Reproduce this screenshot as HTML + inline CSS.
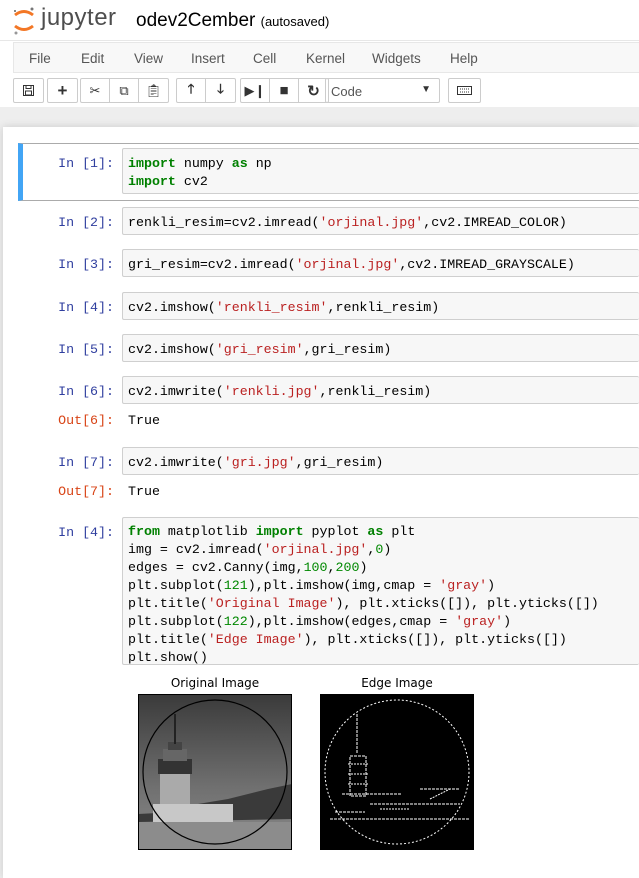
<!DOCTYPE html>
<html><head><meta charset="utf-8"><style>
*{margin:0;padding:0;box-sizing:border-box}
body{width:639px;height:878px;overflow:hidden;background:#fff;font-family:"Liberation Sans",sans-serif;position:relative}
.a{position:absolute}
.menu span{position:absolute;top:8px;font-size:13.5px;color:#555}
.btn{position:absolute;top:78px;height:25px;border:1px solid #ccc;border-radius:2px;background:#fff;display:flex}
.btn div{width:29px;height:23px;border-right:1px solid #ccc;display:flex;align-items:center;justify-content:center;font-size:13px;color:#333}
.btn div:last-child{border-right:none}
.pr{position:absolute;right:525px;font-family:"Liberation Mono",monospace;font-size:13.3px;color:#303f9f;white-space:pre}
.out{color:#d84315}
.inp{position:absolute;left:122px;right:0;background:#f7f7f7;border:1px solid #cfcfcf;border-radius:2px;border-right:none}
.code{position:absolute;left:128px;font-family:"Liberation Mono",monospace;font-size:13.3px;color:#000;white-space:pre;line-height:18px}
.k{color:#008000;font-weight:bold}.s{color:#ba2121}.n{color:#080}
</style></head><body>
<svg class="a" style="left:12px;top:6px" width="24" height="30" viewBox="0 0 24 30">
<path d="M3 9 Q12 2 21 9" stroke="#f37726" stroke-width="3" fill="none"/>
<path d="M3 20 Q12 27 21 20" stroke="#f37726" stroke-width="3" fill="none"/>
<circle cx="20" cy="3" r="1.5" fill="#767677"/><circle cx="4" cy="27" r="1.5" fill="#989798"/><circle cx="3" cy="5" r="1" fill="#616262"/>
</svg>
<div class="a" style="left:41px;top:4px;font-size:24px;color:#4e4e4e;letter-spacing:0.5px">jupyter</div>
<div class="a" style="left:136px;top:10px;font-size:19px;color:#000">odev2Cember <span style="font-size:13px">(autosaved)</span></div>
<div class="a" style="left:0;top:40px;width:639px;height:1px;background:#e7e7e7"></div>
<div class="a menu" style="left:13px;top:42px;width:626px;height:31px;background:#f8f8f8;border:1px solid #e7e7e7;border-right:none">
<span style="left:15px">File</span><span style="left:67px">Edit</span><span style="left:120px">View</span><span style="left:177px">Insert</span><span style="left:239px">Cell</span><span style="left:292px">Kernel</span><span style="left:358px">Widgets</span><span style="left:436px">Help</span></div>
<div class="btn" style="left:13px"><div>
<svg width="11" height="11"><rect x="0.5" y="0.5" width="10" height="10" fill="none" stroke="#333"/><rect x="3" y="0.5" width="5" height="3" fill="none" stroke="#333"/><rect x="2.5" y="6" width="6" height="4" fill="none" stroke="#333"/></svg></div></div>
<div class="btn" style="left:47px"><div style="font-weight:bold;font-size:17px">+</div></div>
<div class="btn" style="left:80px"><div>✂</div><div>⧉</div><div>📋︎</div></div>
<div class="btn" style="left:176px"><div style="font-weight:bold">🡑</div><div style="font-weight:bold">🡓</div></div>
<div class="btn" style="left:240px"><div>▶❙</div><div style="font-size:15px">■</div><div style="font-weight:bold;font-size:15px">↻</div></div>
<div class="a" style="left:325px;top:78px;width:115px;height:25px;border:1px solid #ccc;border-radius:2px;font-size:13px;color:#555;padding:5px 5px">Code<span style="position:absolute;right:8px;top:5px;font-size:10px;color:#333">▼</span></div>
<div class="btn" style="left:448px"><div style="width:31px"><svg width="15" height="9"><rect x="0.5" y="0.5" width="14" height="8" fill="none" stroke="#333"/><path d="M3 3h9M3 6h9" stroke="#333" stroke-dasharray="1 1"/></svg></div></div>
<div class="a" style="left:0;top:107px;width:639px;height:771px;background:#eee"></div>
<div class="a" style="left:3px;top:127px;width:636px;height:751px;background:#fff;box-shadow:0 0 8px rgba(0,0,0,.15)"></div>
<div class="a" style="left:18px;top:143px;width:621px;height:58px;border:1px solid #ababab;border-right:none;border-left:5px solid #42a5f5"></div>
<div class="pr" style="top:156px">In [1]:</div>
<div class="inp" style="top:148px;height:46px"></div>
<div class="code" style="top:155px"><span class="k">import</span> numpy <span class="k">as</span> np
<span class="k">import</span> cv2</div>

<div class="pr" style="top:215px">In [2]:</div><div class="inp" style="top:207px;height:28px"></div>
<div class="code" style="top:214px">renkli_resim=cv2.imread(<span class="s">'orjinal.jpg'</span>,cv2.IMREAD_COLOR)</div>

<div class="pr" style="top:257px">In [3]:</div><div class="inp" style="top:249px;height:28px"></div>
<div class="code" style="top:256px">gri_resim=cv2.imread(<span class="s">'orjinal.jpg'</span>,cv2.IMREAD_GRAYSCALE)</div>

<div class="pr" style="top:300px">In [4]:</div><div class="inp" style="top:292px;height:28px"></div>
<div class="code" style="top:299px">cv2.imshow(<span class="s">'renkli_resim'</span>,renkli_resim)</div>

<div class="pr" style="top:342px">In [5]:</div><div class="inp" style="top:334px;height:28px"></div>
<div class="code" style="top:341px">cv2.imshow(<span class="s">'gri_resim'</span>,gri_resim)</div>

<div class="pr" style="top:384px">In [6]:</div><div class="inp" style="top:376px;height:28px"></div>
<div class="code" style="top:383px">cv2.imwrite(<span class="s">'renkli.jpg'</span>,renkli_resim)</div>
<div class="pr out" style="top:413px">Out[6]:</div><div class="code" style="top:412px">True</div>

<div class="pr" style="top:455px">In [7]:</div><div class="inp" style="top:447px;height:28px"></div>
<div class="code" style="top:454px">cv2.imwrite(<span class="s">'gri.jpg'</span>,gri_resim)</div>
<div class="pr out" style="top:484px">Out[7]:</div><div class="code" style="top:483px">True</div>

<div class="pr" style="top:525px">In [4]:</div><div class="inp" style="top:517px;height:148px"></div>
<div class="code" style="top:523px"><span class="k">from</span> matplotlib <span class="k">import</span> pyplot <span class="k">as</span> plt
img = cv2.imread(<span class="s">'orjinal.jpg'</span>,<span class="n">0</span>)
edges = cv2.Canny(img,<span class="n">100</span>,<span class="n">200</span>)
plt.subplot(<span class="n">121</span>),plt.imshow(img,cmap = <span class="s">'gray'</span>)
plt.title(<span class="s">'Original Image'</span>), plt.xticks([]), plt.yticks([])
plt.subplot(<span class="n">122</span>),plt.imshow(edges,cmap = <span class="s">'gray'</span>)
plt.title(<span class="s">'Edge Image'</span>), plt.xticks([]), plt.yticks([])
plt.show()</div>

<div class="a" style="left:138px;top:676px;width:154px;text-align:center;font-family:'DejaVu Sans',sans-serif;font-size:12px;color:#000">Original Image</div>
<div class="a" style="left:320px;top:676px;width:154px;text-align:center;font-family:'DejaVu Sans',sans-serif;font-size:12px;color:#000">Edge Image</div>
<svg class="a" style="left:138px;top:694px" width="154" height="156" viewBox="0 0 154 156">
<defs><linearGradient id="g" x1="0" y1="0" x2="0" y2="1"><stop offset="0" stop-color="#3a3a3a"/><stop offset=".6" stop-color="#707070"/><stop offset="1" stop-color="#8a8a8a"/></linearGradient></defs>
<rect width="154" height="156" fill="url(#g)"/>
<path d="M0 120 L40 118 L60 110 L90 105 L110 100 L130 95 L154 90 L154 125 L0 128Z" fill="#3a3a3a"/>
<rect x="22" y="80" width="30" height="45" fill="#aaa"/>
<rect x="20" y="65" width="34" height="15" fill="#333"/>
<rect x="25" y="55" width="24" height="12" fill="#666"/>
<rect x="30" y="48" width="14" height="8" fill="#444"/>
<rect x="36" y="20" width="2" height="30" fill="#222"/>
<rect x="15" y="110" width="80" height="20" fill="#c8c8c8"/>
<rect x="0" y="128" width="154" height="28" fill="#8c8c8c"/>
<rect x="0.5" y="0.5" width="153" height="155" fill="none" stroke="#000"/>
<circle cx="77" cy="78" r="72" fill="none" stroke="#000" stroke-width="1.2"/>
</svg>
<svg class="a" style="left:320px;top:694px" width="154" height="156" viewBox="0 0 154 156">
<rect width="154" height="156" fill="#000"/>
<circle cx="77" cy="78" r="72" fill="none" stroke="#fff" stroke-width="1" stroke-dasharray="2 2"/>
<path d="M37 20 V60 M30 62 h16 v40 h-16z M22 100 h60 M10 125 h140 M50 110 h90 M100 95 h40 M15 118 h30" stroke="#fff" stroke-width="1" fill="none" stroke-dasharray="3 1"/>
<path d="M28 70 h20 M28 80 h20 M28 90 h20 M60 115 h30 M110 105 l20 -10" stroke="#fff" stroke-width="1" fill="none" stroke-dasharray="2 1"/>
</svg>
</body></html>
